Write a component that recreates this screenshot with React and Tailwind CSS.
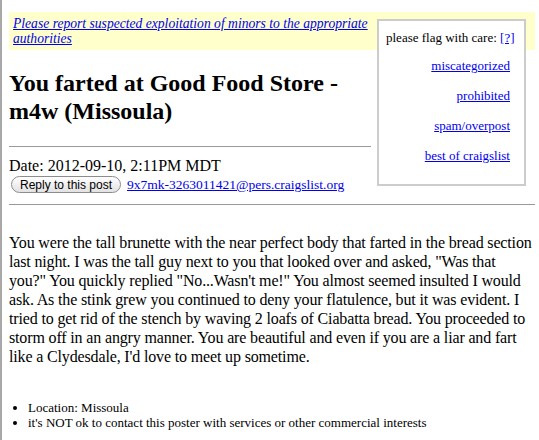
import React from "react";

const flagLinks = ["miscategorized", "prohibited", "spam/overpost", "best of craigslist"];

const bodyLines = [
  "You were the tall brunette with the near perfect body that farted in the bread section",
  'last night. I was the tall guy next to you that looked over and asked, "Was that',
  'you?" You quickly replied "No...Wasn\'t me!" You almost seemed insulted I would',
  "ask. As the stink grew you continued to deny your flatulence, but it was evident. I",
  "tried to get rid of the stench by waving 2 loafs of Ciabatta bread. You proceeded to",
  "storm off in an angry manner. You are beautiful and even if you are a liar and fart",
  "like a Clydesdale, I'd love to meet up sometime.",
];

function FlagBox() {
  return (
    <div className="float-right mt-[19px] ml-[6px] mr-[9px] w-[149px] h-[167px] border-2 border-[#cccccc] bg-white pt-[9px] text-[13px] leading-[15px]">
      <div className="pl-[7px] text-black">
        please flag with care:{" "}
        <a href="#" className="text-[#0000ee] underline">[?]</a>
      </div>
      {flagLinks.map((label, i) => (
        <div key={label} className={(i === 0 ? "mt-[13px]" : "mt-[15px]") + " pr-[14px] text-right"}>
          <a href="#" className="text-[#0000ee] underline">{label}</a>
        </div>
      ))}
    </div>
  );
}

export default function App() {
  return (
    <div
      className="h-[440px] overflow-hidden bg-white border-l-2 border-[#a8a8a8] pl-[7px] pr-[4px] text-black"
      style={{ fontFamily: '"Liberation Serif", "Times New Roman", serif' }}
    >
      <FlagBox />

      <div className="pt-[12px]">
        <div className="bg-[#ffffcc] pl-[4px] py-[4px] text-[13.6px] leading-[15px] italic">
          <a href="#" className="text-[#0000ee] underline">
            Please report suspected exploitation of minors to the appropriate authorities
          </a>
        </div>
      </div>

      <h2 className="mt-[19px] text-[24px] leading-[28px] font-bold">
        You farted at Good Food Store - m4w (Missoula)
      </h2>

      <hr className="mt-[21px] h-[2px] overflow-hidden border-t border-b-0 border-[#9a9a9a]" />

      <div className="mt-[8px] text-[16px] leading-[19px]">Date: 2012-09-10, 2:11PM MDT</div>

      <div className="mt-[1px] flex items-center gap-[6px] pl-[2px]">
        <button
          className="h-[17px] px-[8px] rounded-full border border-[#8c8c8c] bg-gradient-to-b from-white to-[#e2e2e2] text-[12px] leading-[14px] text-black"
          style={{ fontFamily: '"Liberation Sans", Arial, sans-serif' }}
        >
          Reply to this post
        </button>
        <a href="#" className="text-[13.5px] leading-[15px] text-[#0000ee] underline">
          9x7mk-3263011421@pers.craigslist.org
        </a>
      </div>

      <hr className="mt-[11px] border-t border-[#9a9a9a]" />

      <p className="mt-[28px] text-[16px] leading-[19px] tracking-[-0.15px] whitespace-nowrap">
        {bodyLines.map((line, i) => (
          <React.Fragment key={i}>
            {line}
            {i < bodyLines.length - 1 && <br />}
          </React.Fragment>
        ))}
      </p>

      <ul className="mt-[34px] list-disc pl-[19px] text-[13px] leading-[15px]">
        <li>Location: Missoula</li>
        <li>it's NOT ok to contact this poster with services or other commercial interests</li>
      </ul>
    </div>
  );
}
